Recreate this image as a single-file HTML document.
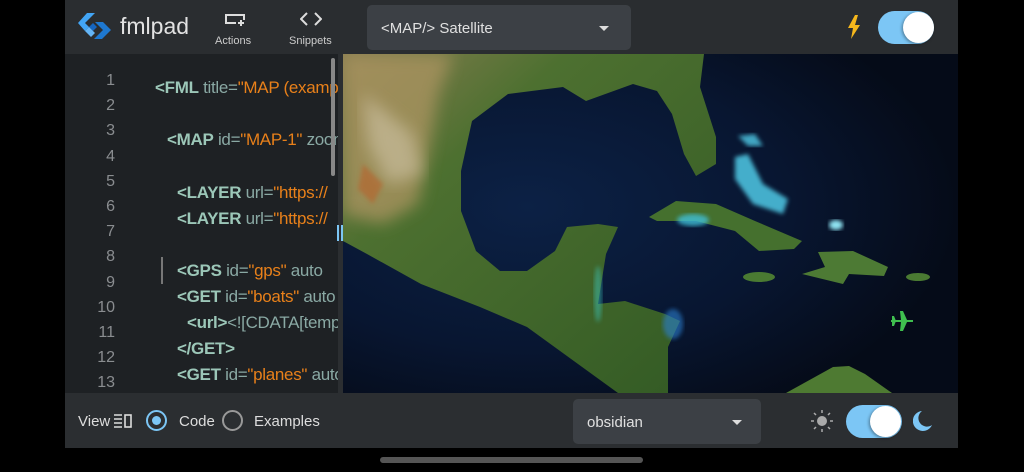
<!DOCTYPE html>
<html><head><meta charset="utf-8"><style>
*{margin:0;padding:0;box-sizing:border-box}
body{width:1024px;height:472px;background:#000;position:relative;overflow:hidden;font-family:"Liberation Sans",sans-serif}
.abs{position:absolute}
#top{left:65px;top:0;width:893px;height:54px;background:#2a2d30}
#ed{left:65px;top:54px;width:278px;height:339px;background:#1e2124;overflow:hidden}
#map{left:343px;top:54px;width:615px;height:339px;background:#0b1424;overflow:hidden}
#bot{left:65px;top:393px;width:893px;height:55px;background:#2b2e31}
.ln{position:absolute;right:228px;width:40px;text-align:right;color:#8a8d90;font-size:16px}
.cd{position:absolute;white-space:nowrap;font-size:17px;color:#8aa9a4;letter-spacing:-0.3px}
.t{color:#9cc7b8;font-weight:bold}
.s{color:#e8801a}
</style></head><body>
<div id="top" class="abs">
  <svg class="abs" style="left:13px;top:13px" width="34" height="27" viewBox="0 0 34 27">
    <path d="M9 0h8L7 10l4 4-4 4L0 10z" fill="#42a5f5"/>
    <path d="M17 9h8l8 8-9 9h-8l9-9-4-4z" fill="#1e78d0"/>
    <path d="M11 14l4-4 4 4-4 4z" fill="#1565c0"/>
    <path d="M7 18l4-4 6 6-4 4z" fill="#64b5f6"/>
  </svg>
  <div class="abs" style="left:55px;top:13px;font-size:23px;color:#e2e2e2">fmlpad</div>
  <svg class="abs" style="left:159px;top:13px" width="22" height="14" viewBox="0 0 22 14"><path d="M12 10H2V2h18v5" fill="none" stroke="#ddd" stroke-width="2"/><path d="M17 7v6M14 10h6" stroke="#ddd" stroke-width="2"/></svg>
  <div class="abs" style="left:150px;top:35px;font-size:11px;color:#ccc">Actions</div>
  <svg class="abs" style="left:235px;top:12px" width="22" height="14" viewBox="0 0 22 14"><path d="M7 1L1 7l6 6M15 1l6 6-6 6" fill="none" stroke="#ddd" stroke-width="2"/></svg>
  <div class="abs" style="left:224px;top:35px;font-size:11px;color:#ccc">Snippets</div>
  <div class="abs" style="left:302px;top:5px;width:264px;height:45px;background:#3c4045;border-radius:5px"></div>
  <div class="abs" style="left:316px;top:20px;font-size:15px;color:#e0e0e0">&lt;MAP/&gt; Satellite</div>
  <div class="abs" style="left:534px;top:26px;border-left:5px solid transparent;border-right:5px solid transparent;border-top:5px solid #ddd"></div>
  <svg class="abs" style="left:782px;top:15px" width="14" height="24" viewBox="0 0 14 24"><path d="M8 0L1 13h5l-2 11 9-14H8l3-10z" fill="#f5b71c"/></svg>
  <div class="abs" style="left:813px;top:11px;width:56px;height:33px;border-radius:17px;background:#7cc6f5"></div>
  <div class="abs" style="left:838px;top:12px;width:31px;height:31px;border-radius:50%;background:#fff;box-shadow:-1px 1px 3px rgba(0,0,0,.4)"></div>
</div>
<div id="ed" class="abs">
  <div class="ln" style="top:18px">1</div><div class="ln" style="top:43px">2</div><div class="ln" style="top:68px">3</div><div class="ln" style="top:94px">4</div><div class="ln" style="top:119px">5</div><div class="ln" style="top:144px">6</div><div class="ln" style="top:169px">7</div><div class="ln" style="top:194px">8</div><div class="ln" style="top:220px">9</div><div class="ln" style="top:245px">10</div><div class="ln" style="top:270px">11</div><div class="ln" style="top:295px">12</div><div class="ln" style="top:320px">13</div>
  <div class="cd" style="left:90px;top:24px"><span class="t">&lt;FML</span> title=<span class="s">"MAP (example)"</span></div>
  <div class="cd" style="left:102px;top:76px"><span class="t">&lt;MAP</span> id=<span class="s">"MAP-1"</span> zoom</div>
  <div class="cd" style="left:112px;top:129px"><span class="t">&lt;LAYER</span> url=<span class="s">"https://</span></div>
  <div class="cd" style="left:112px;top:155px"><span class="t">&lt;LAYER</span> url=<span class="s">"https://</span></div>
  <div class="abs" style="left:96px;top:203px;width:2px;height:27px;background:#777"></div>
  <div class="cd" style="left:112px;top:207px"><span class="t">&lt;GPS</span> id=<span class="s">"gps"</span> auto</div>
  <div class="cd" style="left:112px;top:233px"><span class="t">&lt;GET</span> id=<span class="s">"boats"</span> auto</div>
  <div class="cd" style="left:122px;top:259px"><span class="t">&lt;url&gt;</span>&lt;![CDATA[template</div>
  <div class="cd" style="left:112px;top:285px"><span class="t">&lt;/GET&gt;</span></div>
  <div class="cd" style="left:112px;top:311px"><span class="t">&lt;GET</span> id=<span class="s">"planes"</span> auto</div>
  <div class="abs" style="left:266px;top:4px;width:4px;height:118px;background:#888;border-radius:2px"></div>
  <div class="abs" style="left:273px;top:0;width:5px;height:339px;background:#2b2e31"></div>
  <div class="abs" style="left:272px;top:171px;width:2px;height:16px;background:#7cc6f5"></div>
  <div class="abs" style="left:276px;top:171px;width:2px;height:16px;background:#7cc6f5"></div>
</div>
<div id="map" class="abs">
<svg width="615" height="339" viewBox="0 0 615 339">
  <defs>
    <radialGradient id="oc" cx="0.3" cy="0.45" r="0.7"><stop offset="0" stop-color="#0c2145"/><stop offset="0.6" stop-color="#081631"/><stop offset="1" stop-color="#050b18"/></radialGradient>
    <linearGradient id="ld" x1="0" y1="0" x2="1" y2="1"><stop offset="0" stop-color="#8a7e52"/><stop offset="0.3" stop-color="#4d7030"/><stop offset="1" stop-color="#325a24"/></linearGradient>
    <filter id="bl"><feGaussianBlur stdDeviation="2"/></filter>
    <filter id="bl6"><feGaussianBlur stdDeviation="8"/></filter>
  </defs>
  <rect width="615" height="339" fill="url(#oc)"/>
  <path d="M0 0H361L357 33L373 83L373 110L353 122L341 100L329 60L314 37L290 30L243 47L220 33L165 40L129 67L118 117L118 157L133 197L157 217L184 217L212 197L224 173L255 170L275 173L263 200L255 250L282 247L322 260L337 267L325 293L325 339L275 339L235 310L184 273L137 253L78 230L24 200L0 187Z" fill="url(#ld)"/>
  <path d="M0 0H110L95 40L85 100L75 150L40 170L0 160Z" fill="#a8935f" filter="url(#bl6)" opacity="0.8"/>
  <path d="M20 40L70 80L80 120L45 130L25 90Z" fill="#d0c5a8" filter="url(#bl6)" opacity="0.6"/>
  <path d="M20 110L40 130L30 150L15 135Z" fill="#b8622a" filter="url(#bl)" opacity="0.6"/>
  <path d="M306 163L333 147L373 150L412 167L459 187L451 195L416 197L392 177L353 167L314 167Z" fill="#45702e"/>
  <ellipse cx="350" cy="166" rx="16" ry="6" fill="#3fc0d8" filter="url(#bl)" opacity="0.8"/>
  <path d="M475 198L510 197L545 213L541 222L506 220L500 230L459 220L482 213Z" fill="#4d7a34"/>
  <ellipse cx="416" cy="223" rx="16" ry="5" fill="#4a7a32"/>
  <ellipse cx="575" cy="223" rx="12" ry="4" fill="#4a7a32"/>
  <path d="M392 103L405 100L420 130L445 145L440 160L410 150L392 125Z" fill="#4fc9e6" filter="url(#bl)" opacity="0.85"/>
  <path d="M395 82L412 80L420 92L405 92Z" fill="#4fc9e6" filter="url(#bl)" opacity="0.8"/>
  <ellipse cx="493" cy="171" rx="7" ry="5" fill="#8fe3f2" filter="url(#bl)"/>
  <ellipse cx="255" cy="240" rx="4" ry="28" fill="#3ec4b8" filter="url(#bl)" opacity="0.5"/>
  <ellipse cx="330" cy="270" rx="10" ry="15" fill="#2a7fd0" filter="url(#bl)" opacity="0.6"/>
  <path d="M443 339L490 313L506 312L522 320L549 339Z" fill="#4e7a32"/>
  <g transform="translate(559 267)" fill="#3fbf4f"><path d="M-11 -1h22v2h-22z"/><path d="M-2 -10l3 0 4 9h-6z"/><path d="M-2 10l3 0 4-9h-6z"/><path d="M-10 -5h2l2 5h-4z"/><path d="M-10 5h2l2-5h-4z"/></g>
</svg>
</div>
<div id="bot" class="abs">
  <div class="abs" style="left:13px;top:20px;font-size:15px;color:#ddd">View</div>
  <svg class="abs" style="left:49px;top:21px" width="18" height="14" viewBox="0 0 18 14"><path d="M0 1h8M0 5h8M0 9h8M0 13h8" stroke="#ddd" stroke-width="1.6"/><rect x="11" y="1" width="6" height="12" fill="none" stroke="#ddd" stroke-width="1.6"/></svg>
  <div class="abs" style="left:81px;top:17px;width:21px;height:21px;border-radius:50%;border:2px solid #7cc6f5"></div>
  <div class="abs" style="left:87px;top:23px;width:9px;height:9px;border-radius:50%;background:#7cc6f5"></div>
  <div class="abs" style="left:114px;top:20px;font-size:15px;color:#ddd">Code</div>
  <div class="abs" style="left:157px;top:17px;width:21px;height:21px;border-radius:50%;border:2px solid #999"></div>
  <div class="abs" style="left:189px;top:20px;font-size:15px;color:#ddd">Examples</div>
  <div class="abs" style="left:508px;top:6px;width:188px;height:45px;background:#3c4045;border-radius:5px"></div>
  <div class="abs" style="left:522px;top:21px;font-size:15px;color:#e0e0e0">obsidian</div>
  <div class="abs" style="left:667px;top:27px;border-left:5px solid transparent;border-right:5px solid transparent;border-top:5px solid #ddd"></div>
  <svg class="abs" style="left:746px;top:17px" width="22" height="22" viewBox="0 0 22 22"><circle cx="11" cy="11" r="5" fill="#aaa"/><g stroke="#aaa" stroke-width="1.5"><path d="M11 0v3M11 19v3M0 11h3M19 11h3M3 3l2 2M17 17l2 2M3 19l2-2M17 5l2-2"/></g></svg>
  <div class="abs" style="left:781px;top:12px;width:56px;height:33px;border-radius:17px;background:#7cc6f5"></div>
  <div class="abs" style="left:805px;top:13px;width:31px;height:31px;border-radius:50%;background:#fff;box-shadow:-1px 1px 3px rgba(0,0,0,.4)"></div>
  <svg class="abs" style="left:848px;top:17px" width="20" height="22" viewBox="0 0 20 22"><path d="M9 1A10 10 0 1 0 19 15A8 8 0 0 1 9 1z" fill="#7cc6f5"/></svg>
</div>
<div class="abs" style="left:380px;top:457px;width:263px;height:6px;border-radius:3px;background:#555"></div>
</body></html>
